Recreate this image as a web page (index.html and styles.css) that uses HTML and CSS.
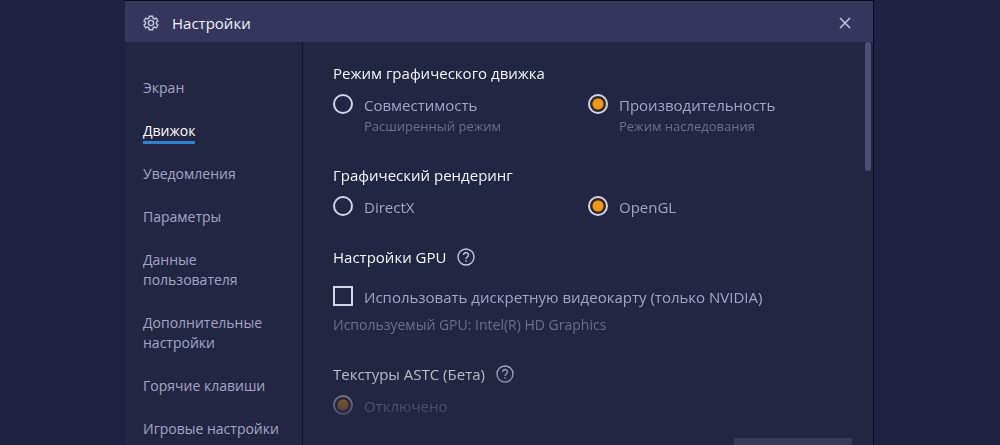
FILE: index.html
```html
<!DOCTYPE html>
<html lang="ru">
<head>
    <meta charset="UTF-8">
    <meta name="viewport" content="width=device-width, initial-scale=1.0">
    <title>Настройки</title>
    <link rel="stylesheet" href="styles.css">
</head>
<body>
    <div class="dialog">
        <header class="titlebar">
            <svg class="gear" viewBox="0 0 16 16" width="16" height="16" aria-hidden="true">
                <path d="M6.300 1.200h3.400l.4 2 1.200.7 2-.8L14.900 6l-1.500 1.300v1.400l1.500 1.300-1.600 2.900-2-.8-1.200.7-.4 2H6.300l-.4-2-1.200-.7-2 .8L1.100 10l1.500-1.300V7.300L1.100 6l1.600-2.900 2 .8 1.200-.7z"/>
                <circle cx="8" cy="8" r="2.600"/>
            </svg>
            <h1>Настройки</h1>
            <button type="button" class="close" aria-label="Закрыть">
                <svg viewBox="0 0 12 12" width="12" height="12"><path d="M1 1l10 10M11 1L1 11"/></svg>
            </button>
        </header>

        <div class="body">
            <nav class="sidebar">
                <a href="#">Экран</a>
                <a href="#" class="active">Движок</a>
                <a href="#">Уведомления</a>
                <a href="#">Параметры</a>
                <a href="#">Данные пользователя</a>
                <a href="#">Дополнительные настройки</a>
                <a href="#">Горячие клавиши</a>
                <a href="#">Игровые настройки</a>
            </nav>

            <main class="main">
                <form class="content">
                    <section>
                        <h2>Режим графического движка</h2>
                        <div class="options">
                            <div class="option">
                                <input type="radio" name="engine" id="compat">
                                <label for="compat">Совместимость <small>Расширенный режим</small></label>
                            </div>
                            <div class="option">
                                <input type="radio" name="engine" id="perf" checked>
                                <label for="perf">Производительность <small>Режим наследования</small></label>
                            </div>
                        </div>
                    </section>

                    <section>
                        <h2>Графический рендеринг</h2>
                        <div class="options">
                            <div class="option">
                                <input type="radio" name="render" id="directx">
                                <label for="directx">DirectX</label>
                            </div>
                            <div class="option">
                                <input type="radio" name="render" id="opengl" checked>
                                <label for="opengl">OpenGL</label>
                            </div>
                        </div>
                    </section>

                    <section>
                        <h2>Настройки GPU
                            <svg class="help" viewBox="0 0 18 18" width="18" height="18" aria-hidden="true">
                                <circle cx="9" cy="9" r="8"/>
                                <path d="M6.600 7a2.400 2.400 0 1 1 3.700 2Q9 9.800 9 11"/>
                                <path d="M9 12.300v1.500"/>
                            </svg>
                        </h2>
                        <div class="option check">
                            <input type="checkbox" id="discrete">
                            <label for="discrete">Использовать дискретную видеокарту (только NVIDIA)</label>
                        </div>
                        <p class="note">Используемый GPU: Intel(R) HD Graphics</p>
                    </section>

                    <section>
                        <h2>Текстуры ASTC (Бета)
                            <svg class="help" viewBox="0 0 18 18" width="18" height="18" aria-hidden="true">
                                <circle cx="9" cy="9" r="8"/>
                                <path d="M6.600 7a2.400 2.400 0 1 1 3.700 2Q9 9.800 9 11"/>
                                <path d="M9 12.300v1.500"/>
                            </svg>
                        </h2>
                        <div class="options">
                            <div class="option">
                                <input type="radio" name="astc" id="astc-off" checked>
                                <label for="astc-off">Отключено</label>
                            </div>
                        </div>
                    </section>
                </form>
                <div class="scrollbar"></div>
                <footer class="footer">
                    <button type="button" class="save" aria-label="Сохранить"></button>
                </footer>
            </main>
        </div>
    </div>
</body>
</html>
```
FILE: styles.css
```css
* {
    box-sizing: border-box;
}
html {
    overflow: hidden;
}
body {
    margin: 0;
    height: 100vh;
    overflow: hidden;
    background: #1f2142;
    color: #a3a5c7;
    font-family: "Open Sans", "Noto Sans", sans-serif;
    font-size: 14px;
    line-height: 20px;
}
h1, h2, p {
    margin: 0;
    font-weight: 400;
}
.dialog {
    display: flex;
    flex-direction: column;
    width: 75%;
    height: calc(100vh + 40px);
    margin-left: 12.4%;
    background: #232642;
    border: 1px solid #0a0a20;
    border-left-color: #202344;
    border-bottom: none;
}
.titlebar {
    display: flex;
    align-items: center;
    height: 41px;
    padding: 2px 22px 0 18px;
    background: #35365c;
}
.titlebar h1 {
    flex: 1;
    margin-left: 13px;
    color: #f0f0fa;
    font-size: 15px;
}
.gear, .close svg, .help {
    display: block;
    fill: none;
    stroke: #c5c6e0;
}
.gear, .help {
    stroke-width: 1.4;
}
.close {
    padding: 0;
    border: none;
    background: none;
    cursor: pointer;
}
.close svg {
    stroke-width: 1.5;
}
.body {
    display: flex;
    flex: 1;
    min-height: 0;
}
.sidebar {
    display: flex;
    flex-direction: column;
    align-items: flex-start;
    gap: 23px;
    width: 178px;
    padding: 36px 16px 0 18px;
    border-right: 1px solid #11132c;
}
.sidebar a {
    color: #a3a5c7;
    text-decoration: none;
}
.sidebar .active {
    color: #fff;
    font-weight: 500;
    box-shadow: 0 3px #2f80cf;
}
.main {
    position: relative;
    display: flex;
    flex: 1;
    flex-direction: column;
    min-width: 0;
}
.content {
    display: flex;
    flex: 1;
    flex-direction: column;
    gap: 29px;
    min-height: 0;
    padding: 21px 30px 0;
    overflow: hidden;
    mask-image: linear-gradient(#000 310px, transparent 390px);
}
h2 {
    display: flex;
    align-items: center;
    gap: 11px;
    color: #f4f4fc;
    font-size: 15px;
    font-weight: 500;
}
.options {
    display: grid;
    grid-template-columns: 255px 1fr;
    margin-top: 11px;
}
.option {
    display: flex;
    align-items: flex-start;
    gap: 11px;
}
.option input {
    flex: none;
    appearance: none;
    width: 20px;
    height: 20px;
    margin: 0;
    border: 2px solid #d3d3ea;
    border-radius: 50%;
}
.option input:checked {
    background: radial-gradient(circle, #ed9a1c 5px, #38291f 6px);
}
.option input[type="checkbox"] {
    border-radius: 0;
}
.option label {
    font-size: 15px;
    line-height: 22px;
}
.option small {
    display: block;
    color: #6b6d8e;
    font-size: 13px;
    line-height: 20px;
}
.check {
    margin-top: 19px;
}
.note {
    margin-top: 7px;
    color: #6b6d8e;
}
.scrollbar {
    position: absolute;
    top: 0;
    right: 2px;
    width: 6px;
    height: 129px;
    border-radius: 3px;
    background: #4a5078;
}
.footer {
    display: flex;
    justify-content: flex-end;
    padding: 10px 21px 15px;
}
.save {
    width: 118px;
    height: 32px;
    border: none;
    background: #383a59;
}
```
